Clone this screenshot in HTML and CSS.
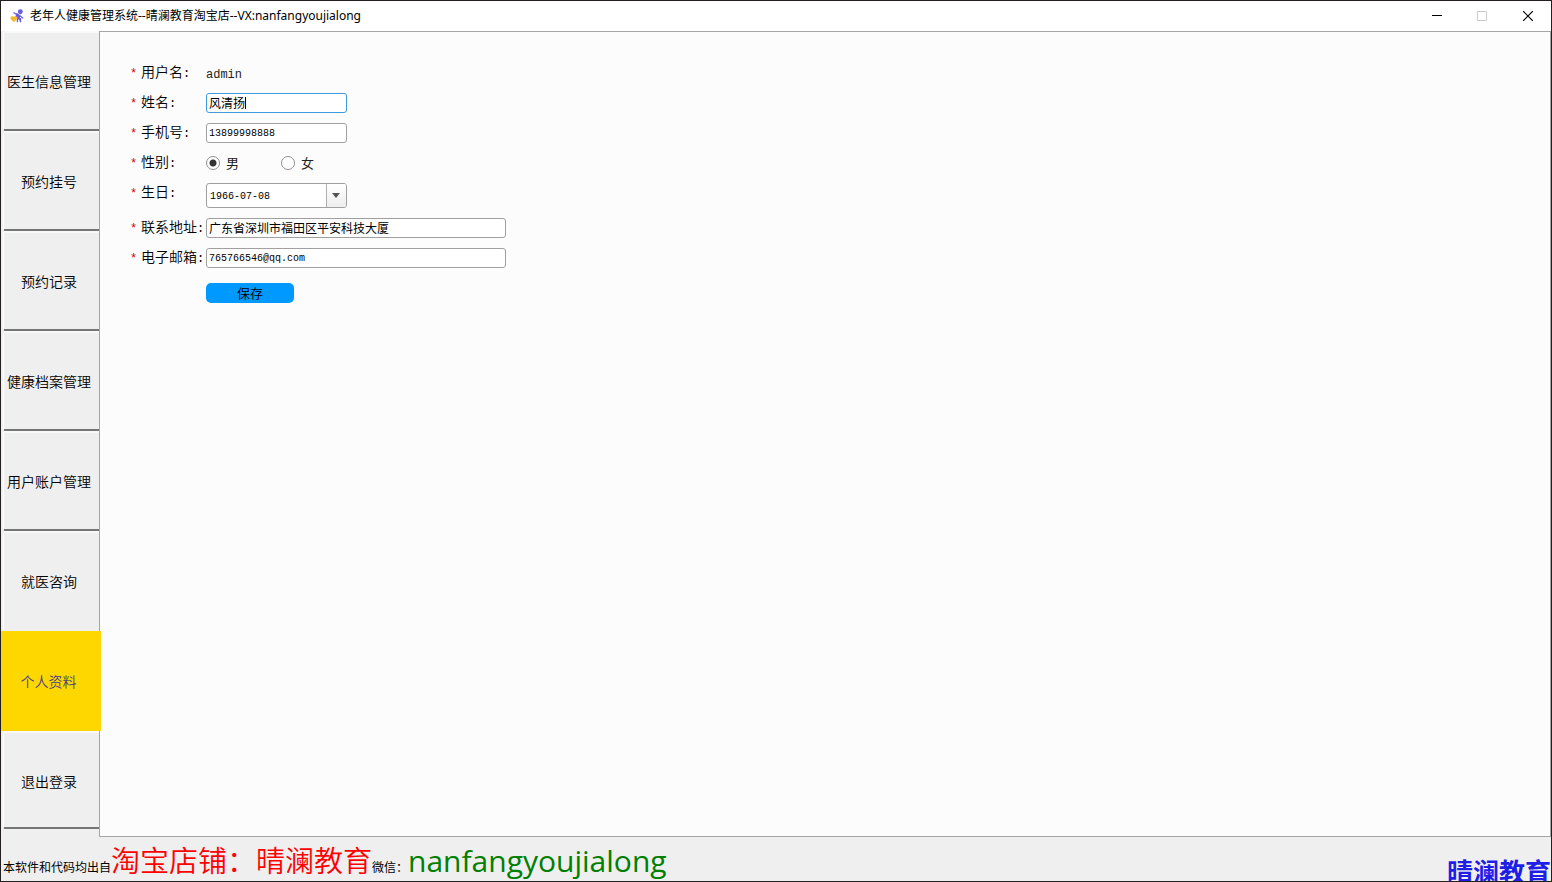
FILE: index.html
```html
<!DOCTYPE html>
<html lang="zh-CN">
<head>
  <meta charset="UTF-8">
  <title>老年人健康管理系统</title>
  <link rel="stylesheet" href="styles.css">
</head>
<body>
  <div class="window">
    <header class="titlebar">
      <svg class="app-icon" viewBox="0 0 16 16">
        <circle cx="11.800" cy="3.200" r="2.800" fill="#6a5be8"/>
        <path d="M4 4L8 6.500" stroke="#6a5be8" stroke-width="1.500" fill="none"/>
        <path d="M8 5.500l3.500 2.500L9 11.500 7 9zM9 10l3 1v4M8.500 11v4M11 7.500l4 3" stroke="#6a5be8" stroke-width="1.500" fill="#6a5be8"/>
        <path d="M4.500 15L.8 11.300a2 2 0 0 1 3.700-2 2 2 0 0 1 3.700 2z" fill="#f5b92e"/>
      </svg>
      <h1>老年人健康管理系统--晴澜教育淘宝店--VX:nanfangyoujialong</h1>
      <div class="window-buttons">
        <button type="button" aria-label="最小化"><svg viewBox="0 0 10 10"><path d="M0 4.500h10" stroke="#000"/></svg></button>
        <button type="button" aria-label="最大化" disabled><svg viewBox="0 0 10 10"><path d="M.5.5h9v9h-9z" stroke="#ccc" fill="none"/></svg></button>
        <button type="button" aria-label="关闭"><svg viewBox="0 0 10 10"><path d="M0 0l10 10M10 0L0 10" stroke="#000" stroke-width="1.200"/></svg></button>
      </div>
    </header>

    <div class="content">
      <nav class="tabs">
        <button type="button">医生信息管理</button>
        <button type="button">预约挂号</button>
        <button type="button">预约记录</button>
        <button type="button">健康档案管理</button>
        <button type="button">用户账户管理</button>
        <button type="button">就医咨询</button>
        <button type="button" class="active">个人资料</button>
        <button type="button">退出登录</button>
      </nav>

      <main class="panel">
        <form class="profile">
          <span class="label"><i>*</i>用户名<b>:</b></span>
          <span class="username">admin</span>

          <label class="label" for="realname"><i>*</i>姓名<b>:</b></label>
          <div class="field focused">
            <input type="text" id="realname" value="风清扬">
            <span class="caret"></span>
          </div>

          <label class="label" for="phone"><i>*</i>手机号<b>:</b></label>
          <div class="field mono"><input type="text" id="phone" value="13899998888"></div>

          <span class="label"><i>*</i>性别<b>:</b></span>
          <div class="radios">
            <label><input type="radio" name="sex" checked>男</label>
            <label><input type="radio" name="sex">女</label>
          </div>

          <label class="label" for="birthday"><i>*</i>生日<b>:</b></label>
          <div class="field mono date">
            <input type="text" id="birthday" value="1966-07-08">
            <button type="button" aria-label="选择日期"><svg viewBox="0 0 8 5"><path d="M0 0h8L4 5z" fill="#555"/></svg></button>
          </div>

          <label class="label" for="address"><i>*</i>联系地址<b>:</b></label>
          <div class="field wide"><input type="text" id="address" value="广东省深圳市福田区平安科技大厦"></div>

          <label class="label" for="email"><i>*</i>电子邮箱<b>:</b></label>
          <div class="field mono wide"><input type="text" id="email" value="765766546@qq.com"></div>

          <button type="submit" class="save">保存</button>
        </form>
      </main>
    </div>

    <footer class="statusbar">
      <p>本软件和代码均出自<span class="shop">淘宝店铺：晴澜教育</span>微信：<span class="wechat">nanfangyoujialong</span></p>
      <strong class="brand">晴澜教育</strong>
    </footer>
  </div>
</body>
</html>
```
FILE: styles.css
```css
* { box-sizing: border-box; }
body { margin: 0; font-family: "Open Sans", "Noto Sans CJK SC", sans-serif; font-size: 12px; color: #000; }
button, input { font-family: inherit; font-size: inherit; color: inherit; }
.window { display: flex; flex-direction: column; height: 100vh; border: 1px solid #231f20; background: #efefef; overflow: hidden; }

/* 标题栏 */
.titlebar { display: flex; align-items: center; height: 30px; padding-left: 9px; background: #fff; }
.app-icon { width: 14px; height: 14px; margin-right: 6px; }
.titlebar h1 { margin: 0; font-family: "Noto Sans", "Noto Sans CJK SC", sans-serif; font-size: 12px; font-weight: normal; line-height: 16px; padding-bottom: 1px; }
.window-buttons { display: flex; margin-left: auto; }
.window-buttons button { display: flex; align-items: center; justify-content: center; width: 45px; height: 28px; border: none; background: none; padding: 0; }
.window-buttons button:last-child { width: 47px; }
.window-buttons svg { width: 10px; height: 10px; }

.content { display: flex; flex: 1; min-height: 0; }

/* 左侧菜单 */
.tabs { display: flex; flex-direction: column; width: 98px; }
.tabs button { height: 100px; padding: 0 5px 0 0; margin-left: 2px; border: none; border-top: 2px solid #f8f8f8; border-left: 1px solid #fff; border-bottom: 2px solid #757575; border-radius: 2px 0 0 2px; background: #efefef; font-size: 14px; font-weight: 350; white-space: nowrap; }
.tabs button:nth-last-child(-n+3) { border-bottom-color: #efefef; }
.tabs .active { position: relative; z-index: 1; width: 100px; margin-left: 0; border: none; border-radius: 0; background: #ffd700; color: #483d8b; }
.tabs button:last-child { height: 98px; padding-top: 2px; border-bottom-color: #757575; }

.panel { flex: 1; padding: 31px 30px; border: 1px solid #a5a5a5; background: #fcfcfc; }

/* 表单 */
.profile { display: grid; grid-template-columns: 76px 1fr; row-gap: 10px; }
.label { height: 18px; line-height: 18px; font-size: 14px; font-weight: 350; color: #000; white-space: nowrap; }
.label i { display: inline-block; width: 11px; font-family: "Liberation Mono", monospace; font-style: normal; font-size: 12px; color: #c00; }
.label b { font-family: "Liberation Mono", monospace; font-size: 12px; font-weight: normal; }
.username { height: 20px; line-height: 24px; font-family: "Liberation Mono", monospace; color: #222; }
.field { position: relative; display: flex; width: 141px; height: 20px; border: 1px solid #a0a0a0; border-radius: 3px; background: #fff; }
.field.wide { width: 300px; }
.field input { flex: 1; width: 0; padding: 0 2px; border: none; background: none; outline: none; }
.field.mono input { font-family: "Liberation Mono", monospace; font-size: 10px; }
.field.focused { border-color: #3f9bdc; }
.caret { position: absolute; left: 38px; top: 3px; width: 1px; height: 12px; background: #000; }
.field.date { height: 25px; }
.field.date input { padding: 2px 3px 0; }
.field.date button { display: flex; align-items: center; justify-content: center; width: 20px; padding: 0 2px 0 0; border: none; border-left: 1px solid #b0b0b0; border-radius: 0 2px 2px 0; background: linear-gradient(#fff, #eee); }
.field.date svg { width: 8px; height: 5px; }
.radios { display: flex; height: 20px; }
.radios label { display: flex; align-items: center; width: 75px; font-size: 13px; line-height: 18px; color: #222; }
.radios input { appearance: none; width: 14px; height: 14px; margin: 0 6px 0 0; border: 1px solid #909090; border-radius: 50%; background: #fff; }
.radios input:checked { background: radial-gradient(circle, #333 3px, #fff 4px); }
.save { grid-column: 2; width: 88px; height: 20px; margin-top: 5px; padding: 0; border: none; border-radius: 5px; background: #0099ff; font-size: 13px; font-weight: 350; line-height: 20px; }

/* 底部信息 */
.statusbar { display: flex; justify-content: space-between; height: 44px; overflow: hidden; }
.statusbar p { margin: 0; padding-left: 2px; line-height: 48px; white-space: nowrap; }
.shop { font-size: 29px; font-weight: 350; color: #f00; }
.wechat { font-size: 30px; color: #008000; }
.brand { margin-top: 22px; font-size: 26px; line-height: 26px; color: #1e1ee6; }
```
